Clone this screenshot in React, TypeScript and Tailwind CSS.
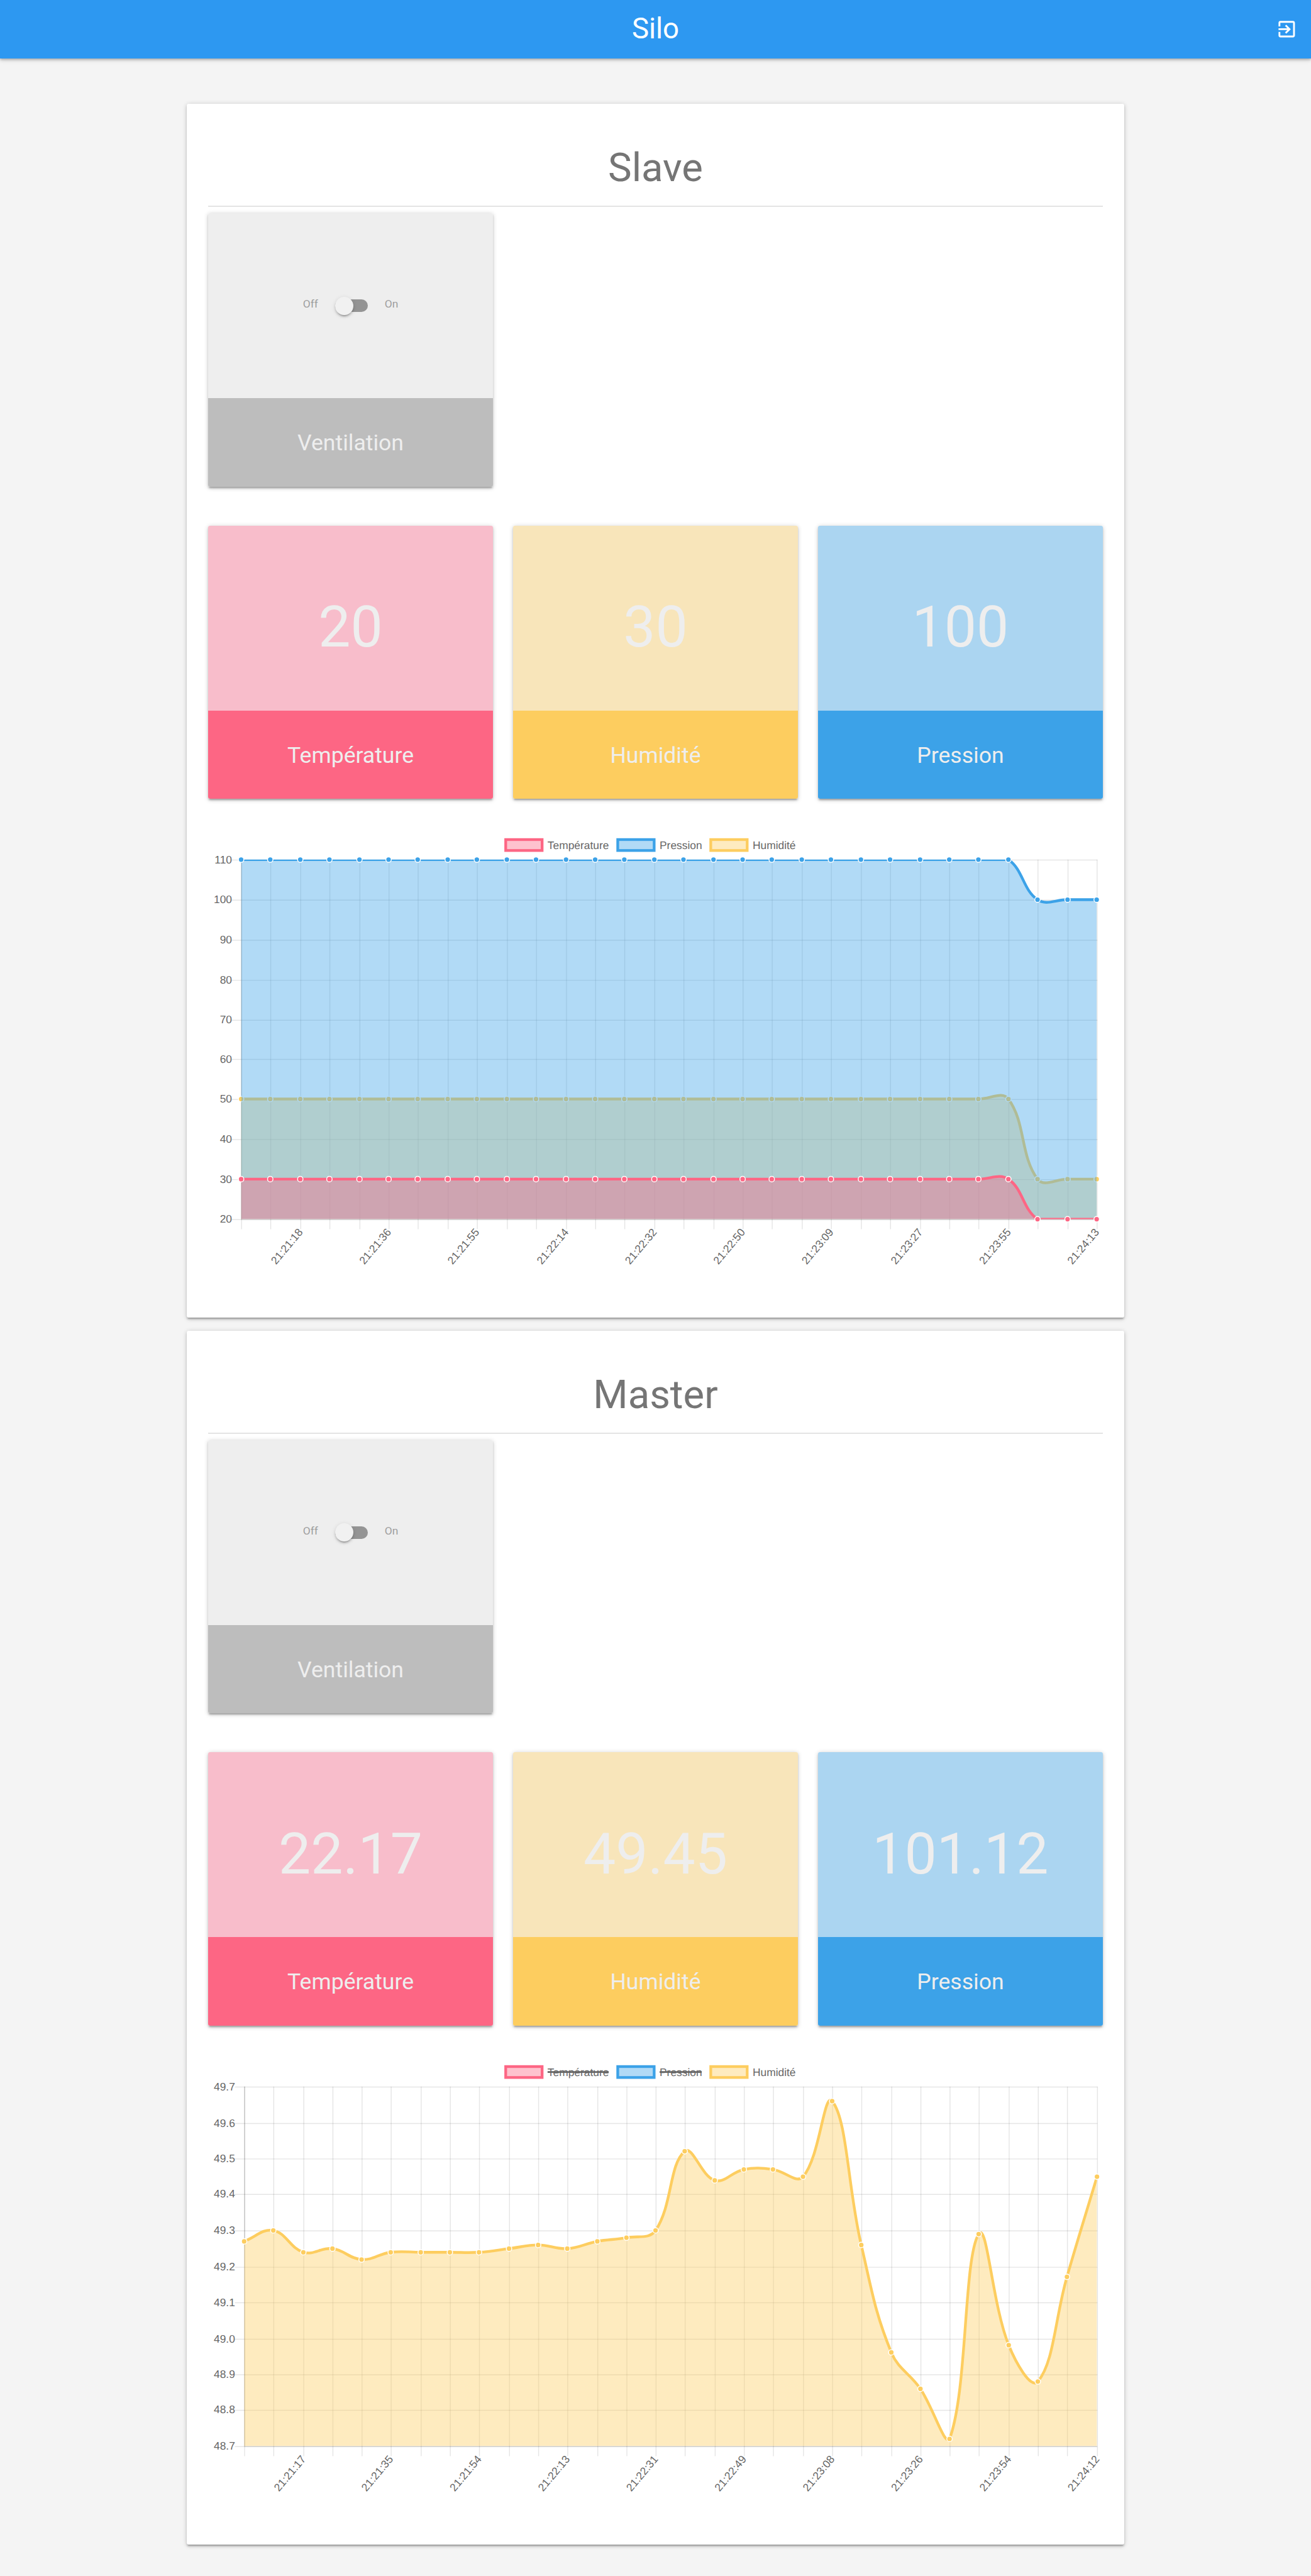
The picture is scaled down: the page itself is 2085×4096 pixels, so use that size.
import React from "react";

const PINK = "#fd6684";
const BLUE = "#3ca2e8";
const YELLOW = "#fdcd5f";

type Dataset = {
  label: string;
  color: string;
  fill: string;
  values: number[];
  hidden?: boolean;
};

type ChartProps = {
  left: number;
  min: number;
  max: number;
  step: number;
  decimals: number;
  times: string[];
  datasets: Dataset[];
};

type Point = { x: number; y: number };

const TOP = 944;
const BOTTOM = 1339;
const RIGHT = 1205.3;
const TENSION = 0.4;

// Smoothed path through the points, control points kept inside the plot area.
function splinePath(points: Point[], left: number): string {
  const cap = (p: Point): Point => ({
    x: Math.min(Math.max(p.x, left), RIGHT),
    y: Math.min(Math.max(p.y, TOP), BOTTOM),
  });
  const controls = points.map((cur, i) => {
    const prev = points[i - 1] ?? cur;
    const next = points[i + 1] ?? cur;
    const d01 = Math.hypot(cur.x - prev.x, cur.y - prev.y);
    const d12 = Math.hypot(next.x - cur.x, next.y - cur.y);
    const fa = (TENSION * d01) / (d01 + d12);
    const fb = (TENSION * d12) / (d01 + d12);
    return {
      before: cap({ x: cur.x - fa * (next.x - prev.x), y: cur.y - fa * (next.y - prev.y) }),
      after: cap({ x: cur.x + fb * (next.x - prev.x), y: cur.y + fb * (next.y - prev.y) }),
    };
  });
  let d = `M${points[0].x} ${points[0].y}`;
  for (let i = 1; i < points.length; i++) {
    const a = controls[i - 1].after;
    const b = controls[i].before;
    d += `C${a.x} ${a.y} ${b.x} ${b.y} ${points[i].x} ${points[i].y}`;
  }
  return d;
}

const LEGEND_X = [555.7, 678.8, 781];

function LineChart({ left, min, max, step, decimals, times, datasets }: ChartProps) {
  const id = React.useId();
  const count = 30;
  const xs = Array.from({ length: count }, (_, i) => left + Math.round((i * (1205 - left)) / (count - 1)));
  const toY = (v: number) => Math.round(BOTTOM - ((v - min) / (max - min)) * (BOTTOM - TOP));
  const tickCount = Math.round((max - min) / step) + 1;
  const ticks = Array.from({ length: tickCount }, (_, i) => min + i * step);
  const drawn = datasets.filter((d) => !d.hidden).reverse();

  return (
    <svg
      viewBox="228.75 900 982.5 500"
      className="block h-[724px] w-full font-['Liberation_Sans',Arial,sans-serif] text-[12px] [text-rendering:geometricPrecision]"
    >
      <clipPath id={id}>
        <rect x={left} y={TOP} width={RIGHT - left} height={BOTTOM - TOP} />
      </clipPath>

      {datasets.map((d, i) => (
        <g key={d.label}>
          <rect x={LEGEND_X[i]} y={922} width={40} height={12} fill={d.fill} stroke={d.color} strokeWidth={3} />
          <text x={LEGEND_X[i] + 46} y={932.1} fill="#666">
            {d.label}
          </text>
          {d.hidden && (
            <line
              x1={LEGEND_X[i] + 46}
              x2={LEGEND_X[i] + (i === 0 ? 113.2 : 92.3)}
              y1={928}
              y2={928}
              stroke="#666"
              strokeWidth={2}
            />
          )}
        </g>
      ))}

      {ticks.map((t, i) => {
        const y = toY(t);
        return (
          <g key={i}>
            <line x1={left - 10.3} x2={RIGHT + 0.5} y1={y + 0.5} y2={y + 0.5} stroke="rgba(0,0,0,0.1)" />
            <text x={left - 10} y={y + 4} textAnchor="end" fill="#666">
              {t.toFixed(decimals)}
            </text>
          </g>
        );
      })}

      {xs.map((x, i) => (
        <g key={i}>
          <line
            x1={x + 0.5}
            x2={x + 0.5}
            y1={TOP}
            y2={BOTTOM}
            stroke={i === 0 ? "rgba(0,0,0,0.25)" : "rgba(0,0,0,0.1)"}
          />
          <line x1={x + 0.5} x2={x + 0.5} y1={BOTTOM} y2={BOTTOM + 11} stroke="rgba(0,0,0,0.1)" />
          {i % 3 === 2 && (
            <text transform={`translate(${x + 0.4} 1351) rotate(-50)`} y={3.9} textAnchor="end" fill="#666">
              {times[(i - 2) / 3]}
            </text>
          )}
        </g>
      ))}
      <line x1={left} x2={RIGHT} y1={BOTTOM + 0.5} y2={BOTTOM + 0.5} stroke="rgba(0,0,0,0.1)" />

      {drawn.map((d) => {
        const points = d.values.map((v, i) => ({ x: xs[i], y: toY(v) }));
        const path = splinePath(points, left);
        return (
          <g key={d.label}>
            <g clipPath={`url(#${id})`}>
              <path d={`${path}L${xs[count - 1]} ${BOTTOM}L${left} ${BOTTOM}Z`} fill={d.fill} />
              <path d={path} fill="none" stroke={d.color} strokeWidth={3} />
            </g>
            {points.map((p, i) => (
              <circle key={i} cx={p.x} cy={p.y} r={3} fill={d.color} stroke="#fff" strokeWidth={1} />
            ))}
          </g>
        );
      })}
    </svg>
  );
}

const SHADOW =
  "shadow-[0_2.9px_2.9px_0_rgba(0,0,0,0.14),0_4.3px_1.5px_-2.9px_rgba(0,0,0,0.12),0_1.5px_7.2px_0_rgba(0,0,0,0.2)]";

function Tile({
  label,
  light,
  dark,
  children,
}: {
  label: string;
  light: string;
  dark: string;
  children: React.ReactNode;
}) {
  return (
    <div className={`flex h-[434.4px] flex-col overflow-hidden rounded-[3px] text-[#eee] ${SHADOW}`}>
      <div className={`flex h-[294px] items-center justify-center ${light}`}>{children}</div>
      <div className={`flex flex-1 items-center justify-center pt-[3.6px] text-[35.6px] leading-none ${dark}`}>{label}</div>
    </div>
  );
}

function Value({ children }: { children: React.ReactNode }) {
  return <span className="pt-[28.8px] text-[91.2px] leading-none">{children}</span>;
}

function Switch() {
  return (
    <div className="flex items-center gap-[27px] text-[17.4px] leading-none text-[#9e9e9e]">
      <span className="pb-[4px]">Off</span>
      <span className="flex h-[20.3px] w-[52px] items-center rounded-full bg-[#949494]">
        <span className="size-[29px] shrink-0 rounded-full bg-[#f1f1f1] shadow-[0_4.3px_1.5px_-2.9px_rgba(0,0,0,0.2),0_2.9px_2.9px_0_rgba(0,0,0,0.14),0_1.5px_7.2px_0_rgba(0,0,0,0.12)]" />
      </span>
      <span className="pb-[4px]">On</span>
    </div>
  );
}

function Silo({
  title,
  values,
  chart,
}: {
  title: string;
  values: [string, string, string];
  chart: ChartProps;
}) {
  return (
    <section className={`h-[1929.7px] rounded-[3px] bg-white px-[34.75px] pt-[34.75px] ${SHADOW}`}>
      <h2 className="mt-[31.9px] mb-[25.2px] text-center text-[63.4px] leading-[69.8px] text-[#757575]">{title}</h2>
      <div className="h-[2px] bg-[#e4e4e4]" />
      <div className="mt-[10px] grid grid-cols-3 gap-[32.6px]">
        <Tile label="Ventilation" light="bg-[#eee]" dark="bg-[#bdbdbd]">
          <Switch />
        </Tile>
      </div>
      <div className="mt-[62.2px] grid grid-cols-3 gap-[32.6px]">
        <Tile label="Température" light="bg-[#f8bdcb]" dark="bg-[#fd6684]">
          <Value>{values[0]}</Value>
        </Tile>
        <Tile label="Humidité" light="bg-[#f8e5ba]" dark="bg-[#fdcd5f]">
          <Value>{values[1]}</Value>
        </Tile>
        <Tile label="Pression" light="bg-[#abd5f1]" dark="bg-[#3ca2e8]">
          <Value>{values[2]}</Value>
        </Tile>
      </div>
      <div className="mt-[33.3px]">
        <LineChart {...chart} />
      </div>
    </section>
  );
}

const steps = (before: number, after: number) => [...Array(27).fill(before), ...Array(3).fill(after)];

const PINK_FILL = "rgba(253,102,132,0.4)";
const BLUE_FILL = "rgba(60,162,232,0.4)";
const YELLOW_FILL = "rgba(253,205,95,0.4)";

const slaveChart: ChartProps = {
  left: 265,
  min: 20,
  max: 110,
  step: 10,
  decimals: 0,
  times: [
    "21:21:18", "21:21:36", "21:21:55", "21:22:14", "21:22:32",
    "21:22:50", "21:23:09", "21:23:27", "21:23:55", "21:24:13",
  ],
  datasets: [
    { label: "Température", color: PINK, fill: PINK_FILL, values: steps(30, 20) },
    { label: "Pression", color: BLUE, fill: BLUE_FILL, values: steps(110, 100) },
    { label: "Humidité", color: YELLOW, fill: YELLOW_FILL, values: steps(50, 30) },
  ],
};

const masterChart: ChartProps = {
  left: 268.35,
  min: 48.7,
  max: 49.7,
  step: 0.1,
  decimals: 1,
  times: [
    "21:21:17", "21:21:35", "21:21:54", "21:22:13", "21:22:31",
    "21:22:49", "21:23:08", "21:23:26", "21:23:54", "21:24:12",
  ],
  datasets: [
    { label: "Température", color: PINK, fill: PINK_FILL, values: [], hidden: true },
    { label: "Pression", color: BLUE, fill: BLUE_FILL, values: [], hidden: true },
    {
      label: "Humidité",
      color: YELLOW,
      fill: YELLOW_FILL,
      values: [
        49.27, 49.3, 49.24, 49.25, 49.22, 49.24, 49.24, 49.24, 49.24, 49.25,
        49.26, 49.25, 49.27, 49.28, 49.3, 49.52, 49.44, 49.47, 49.47, 49.45,
        49.66, 49.26, 48.96, 48.86, 48.72, 49.29, 48.98, 48.88, 49.17, 49.45,
      ],
    },
  ],
};

export default function App() {
  return (
    <div className="h-[4096px] w-full bg-[#f4f4f4] font-['Roboto',sans-serif]">
      <header className={`flex h-[92.7px] items-center bg-[#2d98f1] px-[21.7px] text-white ${SHADOW}`}>
        <div className="w-[34.75px]" />
        <h1 className="flex-1 pb-[2px] text-center text-[45.6px] leading-none">Silo</h1>
        <svg viewBox="0 0 24 24" className="size-[34.75px] fill-current">
          <path d="M10.09 15.59L11.5 17l5-5-5-5-1.41 1.41L12.67 11H3v2h9.67l-2.58 2.59zM19 3H5c-1.11 0-2 .9-2 2v4h2V5h14v14H5v-4H3v4c0 1.1.89 2 2 2h14c1.1 0 2-.9 2-2V5c0-1.1-.9-2-2-2z" />
        </svg>
      </header>
      <main className="mx-auto flex w-[1491.7px] flex-col gap-[20.9px] pt-[72.8px]">
        <Silo title="Slave" values={["20", "30", "100"]} chart={slaveChart} />
        <Silo title="Master" values={["22.17", "49.45", "101.12"]} chart={masterChart} />
      </main>
    </div>
  );
}
